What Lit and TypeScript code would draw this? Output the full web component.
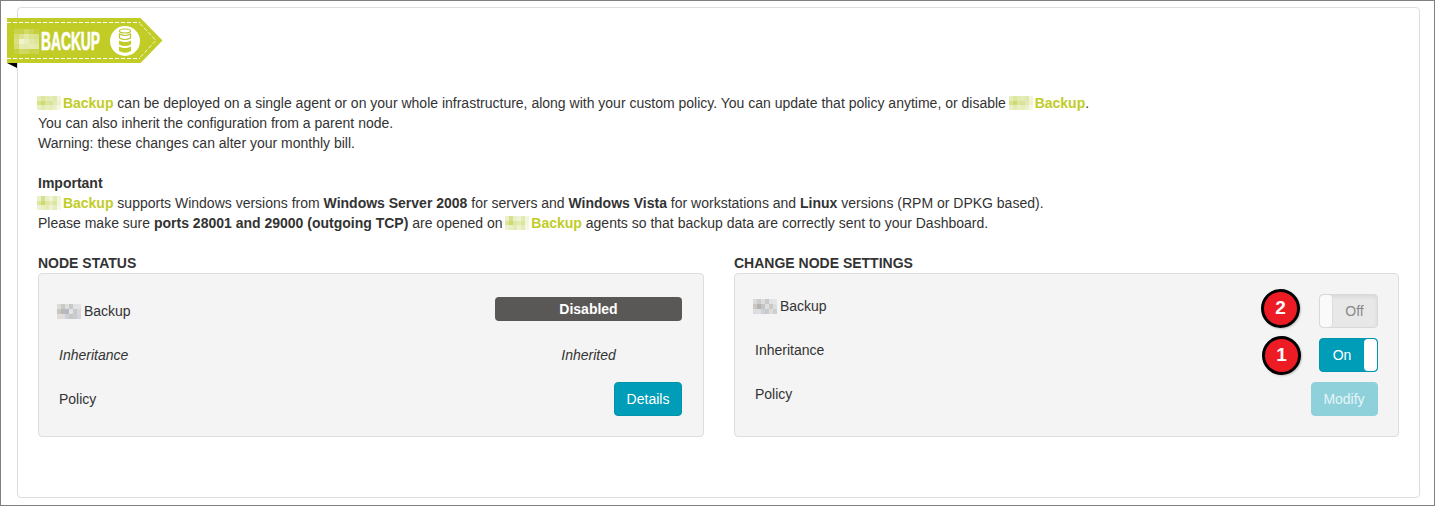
import { LitElement, html, svg, css } from "lit";
import { customElement, property } from "lit/decorators.js";

const GREEN_A = ["#e6edb8","#dde6a0","#e2eaac","#e4ebbb","#dfe8ad","#f2f5dc","#d9e288","#cfdb72","#dce599","#d8e298","#e3eab6","#eef2d2","#eaf0c6","#e4ebb2","#e9efc3","#e6edba","#eaf0c8","#f5f8e5"];
const GREEN_B = ["#eaf0ca","#d6e090","#eaf0c6","#f0f4d6","#e2eab2","#f1f5dc","#dde6a0","#ced96e","#dfe7a6","#e3ebb2","#dbe59c","#f2f5df","#edf2d0","#e9efc2","#e4ebb4","#eef2d2","#e5ecba","#f5f8e8"];
const GRAY_A = ["#dedcd8","#c9c9c9","#dedede","#c8c8c8","#dfe3e6","#dfe3e6","#c9c7c0","#bbb9b3","#b3b7c6","#e3e3e3","#c9c9cb","#d5d8dd","#dfdddd","#e2dddb","#cdd0d6","#c6c6c6","#c9cacd","#d3d6dd"];
const GRAY_B = ["#dcd9d6","#cdcccc","#dcdcdc","#c9c9c9","#dfe3e6","#e3e6e8","#c9c8c6","#b9b1af","#bfc6cb","#e2dfda","#c9c9c9","#dcdee0","#dcdcde","#dcdfe2","#cdd0d6","#c9cacd","#dfdcda","#ccd0d3"];

@customElement("pixel-mask")
class PixelMask extends LitElement {
  @property() tone = "green-a";
  static styles = css`
    :host { display: inline-block; width: 21px; height: 10px; }
    svg { display: block; width: 24px; height: 14px; margin: -2px 0 0 -1px; }
    :host([tone="gray-a"]) svg, :host([tone="gray-b"]) svg { height: 15px; margin-left: -2px; }
  `;
  render() {
    const c = this.tone === "green-a" ? GREEN_A : this.tone === "green-b" ? GREEN_B : this.tone === "gray-a" ? GRAY_A : GRAY_B;
    return html`<svg viewBox="0 0 24 15" preserveAspectRatio="none" shape-rendering="crispEdges">
      ${c.map((f, i) => svg`<rect x=${(i % 6) * 4} y=${Math.floor(i / 6) * 5} width="4" height="5" fill=${f} />`)}
    </svg>`;
  }
}

const RIBBON = [
  "#cad34c","#c9d34a","#d2da68","#ccd553","#c5cf38",
  "#d4dc70","#dce28c","#e3e8a4","#dde38e","#dbe189",
  "#d9e07c","#f0f3cc","#eaeebb","#e3e8a8","#dfe598",
  "#d6dd75","#e6ebb0","#e5eaac","#e8ecb4","#e4e9a7",
  "#c6d03c","#d1d964","#cfd75e","#c8d245","#cad34b",
];

@customElement("backup-ribbon")
class BackupRibbon extends LitElement {
  static styles = css`
    :host { display: block; width: 156px; height: 50px; }
    svg { display: block; }
    .name { font: bold 25px "Liberation Sans", Arial, sans-serif; fill: #fff; stroke: #fff; stroke-width: 0.7px; }
  `;
  render() {
    return html`<svg width="156" height="50" viewBox="0 0 156 50">
      <path d="M0 45H10V50Z" fill="#000" />
      <path d="M0 0H133.500L155.500 22.500L133.500 45H0Z" fill="#c1cc27" />
      <path d="M0 4.500H133M0 40.500H133" fill="none" stroke="#fff" stroke-dasharray="4 2" />
      <path d="M133 5.500L149 22.500L133 39.500" fill="none" stroke="#f4f6d8" stroke-dasharray="4 2" />
      <g shape-rendering="crispEdges">
        ${RIBBON.map((f, i) => svg`<rect x=${7 + (i % 5) * 5} y=${11 + Math.floor(i / 5) * 5} width="5" height="5" fill=${f} />`)}
      </g>
      <text class="name" x="34" y="32" textLength="59" lengthAdjust="spacingAndGlyphs">BACKUP</text>
      <circle cx="118" cy="23" r="15" fill="#fff" />
      <g fill="none" stroke="#b9c52a" stroke-width="1.200">
        <ellipse cx="118" cy="13" rx="5.500" ry="2" />
        <path d="M112.500 16V20Q118 23 123.500 20V16Q118 19 112.500 16Z" />
      </g>
      <path d="M112 22.500Q118 25.500 124 22.500V26.500Q118 29.500 112 26.500ZM112 28.500Q118 31.500 124 28.500V33Q118 36.500 112 33Z" fill="#c1cc27" />
    </svg>`;
  }
}

@customElement("app-root")
class AppRoot extends LitElement {
  static styles = css`
    :host { display: block; box-sizing: border-box; width: 1435px; height: 506px; padding: 6px 14px 7px 16px; border: 1px solid #808080; background: #fff; color: #333; font: 14px/20px "Liberation Sans", Arial, sans-serif; }
    * { box-sizing: border-box; }
    .panel { position: relative; height: 491px; width: 1403px; border: 1px solid #ddd; border-radius: 4px; padding: 85px 20px 0; }
    .ribbon { position: absolute; left: -11px; top: 10px; }
    p { margin: 0 0 20px; white-space: nowrap; }
    .brand { color: #c1cc27; font-weight: bold; }
    .columns { display: grid; grid-template-columns: 666px 665px; gap: 30px; }
    h2 { margin: 0; font-size: 14px; line-height: 20px; }
    .well { height: 164px; border: 1px solid #ddd; border-radius: 4px; background: #f4f4f4; padding: 20px 20px 0; }
    .settings { padding-left: 19px; }
    .row { display: flex; justify-content: space-between; height: 44px; }
    .label { padding: 2px 0 0 1px; }
    .status .label { padding-top: 7px; padding-left: 0; }
    .status { padding-right: 21px; }
    .center { width: 187px; text-align: center; }
    .badge { height: 24px; margin-top: 3px; border-radius: 4px; background: #5a5757; color: #fff; font-weight: bold; line-height: 24px; }
    .inherited { padding-top: 7px; }
    .italic { font-style: italic; }
    .btn { height: 34px; border: 1px solid #0094ad; border-radius: 4px; background: #009db8; color: #fff; font: inherit; padding: 0; }
    .btn:disabled { background: #8ed1db; border-color: #8ed1db; color: #e6f5f7; }
    .details { width: 68px; }
    .modify { width: 67px; padding-right: 1px; }
    .controls { display: flex; }
    .num { width: 39px; height: 39px; margin-top: -5px; border: 3px solid #000; border-radius: 50%; background: #ed1c24; color: #fff; font-size: 19px; font-weight: bold; line-height: 32px; text-align: center; box-shadow: 1px 1px 2px #0003; }
    .two { margin-right: 19px; }
    .one { margin-top: -2px; margin-right: 18px; }
    .switch { display: flex; width: 59px; height: 34px; border: 1px solid #0094ad; border-radius: 4px; background: #009db8; color: #fff; line-height: 32px; text-align: center; overflow: hidden; }
    .word { flex: 1; }
    .knob { width: 13px; background: #fff; border-radius: 4px; }
    .off { background: #e8e8e8; border-color: #d9d9d9; color: #888; box-shadow: inset 0 2px 4px #00000012; }
    .off .word { padding-right: 1px; }
    .off .knob { background: #fafafa; border-right: 1px solid #ddd; }
  `;
  render() {
    const brand = (tone: string) => html`<pixel-mask tone=${tone}></pixel-mask> <span class="brand">Backup</span>`;
    return html`<div class="panel">
      <backup-ribbon class="ribbon"></backup-ribbon>
      <p>${brand("green-a")} can be deployed on a single agent or on your whole infrastructure, along with your custom policy. You can update that policy anytime, or disable ${brand("green-a")}.<br />
        You can also inherit the configuration from a parent node.<br />
        Warning: these changes can alter your monthly bill.</p>
      <p><b>Important</b><br />
        ${brand("green-b")} supports Windows versions from <b>Windows Server 2008</b> for servers and <b>Windows Vista</b> for workstations and <b>Linux</b> versions (RPM or DPKG based).<br />
        Please make sure <b>ports 28001 and 29000 (outgoing TCP)</b> are opened on ${brand("green-b")} agents so that backup data are correctly sent to your Dashboard.</p>
      <div class="columns">
        <section>
          <h2>NODE STATUS</h2>
          <div class="well status">
            <div class="row"><div class="label"><pixel-mask tone="gray-a"></pixel-mask> Backup</div><div class="badge center">Disabled</div></div>
            <div class="row italic"><div class="label">Inheritance</div><div class="center inherited">Inherited</div></div>
            <div class="row"><div class="label">Policy</div><div><button class="btn details">Details</button></div></div>
          </div>
        </section>
        <section>
          <h2>CHANGE NODE SETTINGS</h2>
          <div class="well settings">
            <div class="row"><div class="label"><pixel-mask tone="gray-b"></pixel-mask> Backup</div>
              <div class="controls"><div class="num two">2</div><div class="switch off"><div class="knob"></div><div class="word">Off</div></div></div></div>
            <div class="row"><div class="label">Inheritance</div>
              <div class="controls"><div class="num one">1</div><div class="switch"><div class="word">On</div><div class="knob"></div></div></div></div>
            <div class="row"><div class="label">Policy</div><div><button class="btn modify" disabled>Modify</button></div></div>
          </div>
        </section>
      </div>
    </div>`;
  }
}
